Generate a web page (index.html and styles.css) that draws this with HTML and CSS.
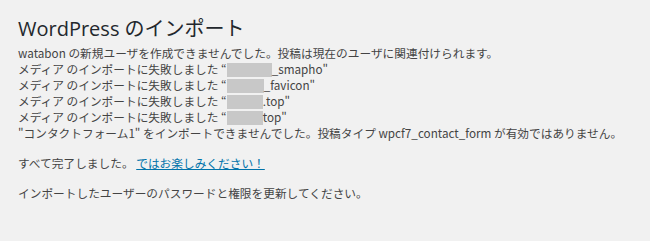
FILE: index.html
```html
<!DOCTYPE html>
<html lang="ja">
<head>
<meta charset="utf-8">
<title>WordPress のインポート</title>
<link rel="stylesheet" href="styles.css">
</head>
<body>
<div class="wrap">
  <h1 class="title">WordPress のインポート</h1>
  <div class="log">
    <div class="line">watabon の新規ユーザを作成できませんでした。投稿は現在のユーザに関連付けられます。</div>
    <div class="line">メディア のインポートに失敗しました “<span class="redact r1"></span>_smapho"</div>
    <div class="line">メディア のインポートに失敗しました “<span class="redact r2"></span>_favicon"</div>
    <div class="line">メディア のインポートに失敗しました “<span class="redact r3"></span>.top"</div>
    <div class="line">メディア のインポートに失敗しました “<span class="redact r3"></span>top"</div>
    <div class="line">"コンタクトフォーム1" をインポートできませんでした。投稿タイプ wpcf7_contact_form が有効ではありません。</div>
  </div>
  <p class="para">すべて完了しました。 <a href="#" class="link">ではお楽しみください！</a></p>
  <p class="para">インポートしたユーザーのパスワードと権限を更新してください。</p>
</div>
</body>
</html>
```
FILE: styles.css
```css
html, body {
  margin: 0;
  padding: 0;
  background: #f1f1f1;
}
body {
  font-family: "Noto Sans CJK JP", sans-serif;
  font-size: 11.7px;
  color: #444;
  width: 650px;
  height: 241px;
  overflow: hidden;
}
.wrap {
  padding: 15px 0 0 18px;
}
.title {
  margin: 0;
  font-family: "Open Sans", "Noto Sans CJK JP", sans-serif;
  font-size: 20px;
  font-weight: 400;
  line-height: 28px;
  color: #23282d;
}
.log {
  margin-top: 2px;
}
.line {
  line-height: 16px;
  height: 16px;
  white-space: nowrap;
}
.redact {
  display: inline-block;
  background: #c8c8c8;
  height: 14px;
  vertical-align: -3px;
}
.r1 { width: 45px; }
.r2 { width: 37px; }
.r3 { width: 36px; }
.para {
  margin: 14px 0 0;
  line-height: 16px;
}
.link {
  color: #0073aa;
  text-decoration: underline;
}
```
